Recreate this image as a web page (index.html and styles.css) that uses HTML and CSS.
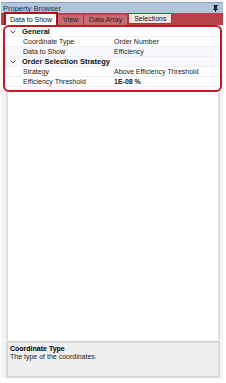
FILE: index.html
```html
<!DOCTYPE html>
<html lang="en">
<head>
    <meta charset="UTF-8">
    <title>Property Browser</title>
    <link rel="stylesheet" href="styles.css">
</head>
<body>
    <div class="panel">
        <div class="titlebar">
            <span>Property Browser</span>
            <svg class="pin" width="6" height="7" viewBox="0 0 6 7">
                <path d="M1 0h4v1h-1v3h1v1h-2v2h-1v-2h-2v-1h1v-3h-1z" fill="#222"/>
            </svg>
        </div>
        <div class="tabs">
            <div class="tab active">Data to Show</div>
            <div class="tab plain">View</div>
            <div class="tab plain">Data Array</div>
            <div class="tab light">Selections</div>
        </div>

        <div class="grid">
            <div class="row cat">
                <svg class="chev" width="6" height="4" viewBox="0 0 6 4"><path d="M0.5 0.5l2.5 2.5l2.5-2.5" fill="none" stroke="#555" stroke-width="1"/></svg>
                General
            </div>
            <div class="row"><span class="name">Coordinate Type</span><span class="val">Order Number</span></div>
            <div class="row"><span class="name">Data to Show</span><span class="val">Efficiency</span></div>
            <div class="row cat">
                <svg class="chev" width="6" height="4" viewBox="0 0 6 4"><path d="M0.5 0.5l2.5 2.5l2.5-2.5" fill="none" stroke="#555" stroke-width="1"/></svg>
                Order Selection Strategy
            </div>
            <div class="row"><span class="name">Strategy</span><span class="val">Above Efficiency Threshold</span></div>
            <div class="row"><span class="name">Efficiency Threshold</span><span class="val bold">1E-08 %</span></div>
        </div>

        <div class="empty"></div>

        <div class="desc">
            <div class="desc-title">Coordinate Type</div>
            <div>The type of the coordinates.</div>
        </div>
    </div>
</body>
</html>
```

FILE: styles.css
```css
body {
    margin: 0;
    background: #fff;
    font-family: "Liberation Sans", Arial, sans-serif;
    font-size: 7px;
    color: #111;
}

.panel {
    width: 222px;
    height: 378px;
    margin-left: 1px;
    display: flex;
    flex-direction: column;
    background: #f4f4f4;
}

.titlebar {
    height: 10px;
    margin-top: 2px;
    padding: 0 4px 0 2px;
    background: #b3c4dc;
    border-top: 1px solid #8fa3c0;
    display: flex;
    align-items: center;
    justify-content: space-between;
    color: #1d2d4a;
    font-size: 7.5px;
}

.tabs {
    height: 12px;
    background: #b8424c;
    display: flex;
    align-items: flex-end;
    padding-left: 3px;
}

.tab {
    height: 10px;
    line-height: 10px;
    padding: 0 5px;
}

.tab.active {
    background: #fff;
    border: 2px solid #b0101e;
    border-bottom: none;
    height: 11px;
    line-height: 11px;
    padding: 0 4px;
}

.tab.plain {
    color: #222;
    background: #c86a72;
    border-right: 1px solid #a03a44;
}

.tab.light {
    background: #f6e6e8;
    border: 1px solid #a33;
    height: 9px;
    line-height: 9px;
    margin-bottom: 1px;
}

.grid {
    margin: 0 1px 0 2px;
    height: 63px;
    padding-top: 0;
    background: #fff;
    border: 2px solid #c21a28;
    border-radius: 6px;
}

.row {
    height: 9px;
    line-height: 9px;
    display: flex;
    align-items: center;
    border-bottom: 1px solid #eef0f4;
}

.row:nth-child(3), .row:nth-child(4) {
    background: #f6f8fb;
}

.cat {
    font-weight: bold;
    font-size: 7.5px;
    padding-left: 5px;
}

.chev {
    margin-right: 6px;
}

.name {
    width: 91px;
    padding-left: 18px;
    color: #222;
}

.val {
    color: #222;
}

.bold {
    font-weight: bold;
}

.empty {
    flex: 1;
    margin: 0 3px 0 5px;
    background: #fff;
    border-left: 2px solid #dcdcdc;
    border-right: 2px solid #dcdcdc;
}

.desc {
    height: 31px;
    margin: 1px 3px 0 5px;
    padding: 2px 2px 0;
    background: #efefef;
    border: 2px solid #d8d8d8;
    color: #222;
}

.desc-title {
    font-weight: bold;
    color: #000;
    margin-bottom: 1px;
}
```
